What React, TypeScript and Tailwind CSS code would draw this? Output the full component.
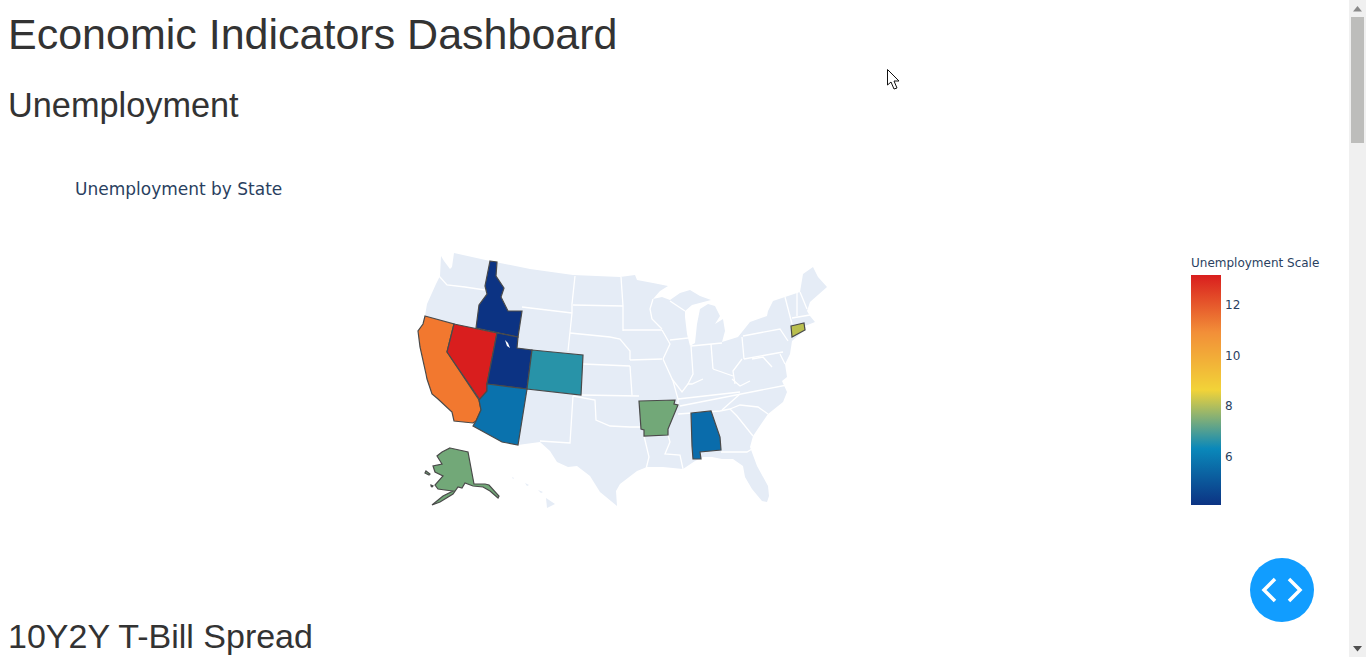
const land = "441,257 444,262 450,270 452,268 454,254 490,262 530,270 573,276 620,278 635,276 637,281 653,284 668,287 660,292 653,300 662,298 670,301 680,294 690,291 700,297 711,301 692,306 685,312 685,318 687,335 690,347 695,344 697,325 700,310 708,305 715,307 720,317 715,325 723,320 725,332 722,343 738,338 750,323 767,317 768,312 773,302 785,298 800,293 803,275 813,268 818,278 827,288 810,303 807,312 810,317 815,323 805,327 806,331 800,335 792,342 790,355 785,365 787,378 782,382 787,393 783,403 768,415 753,437 750,448 757,467 768,487 769,497 767,503 762,502 752,490 745,478 743,467 733,460 722,460 712,458 703,458 695,462 683,470 663,468 647,468 637,472 620,485 616,492 617,507 600,493 590,477 577,467 568,468 557,463 550,452 540,443 525,445 518,446 473,425 425,317 427,305 436,285 440,277";

const lines = [
  "439,277 447,286 465,288 485,291",
  "522,308 572,314",
  "575,277 572,305 572,314 568,352",
  "573,306 623,307",
  "570,334 610,338 620,340 630,352 630,361",
  "583,365 630,367",
  "621,278 623,307 623,332",
  "573,397 570,444 540,442",
  "573,397 595,401 596,421 610,427 630,428 641,428",
  "581,396 639,397",
  "644,437 649,458 646,470",
  "668,436 670,443 665,455 680,456 683,470",
  "678,415 720,412 730,410",
  "721,453 747,453 752,450",
  "730,410 737,417 753,437",
  "730,410 740,406 758,408 768,415",
  "722,411 740,395",
  "680,407 787,386",
  "678,400 740,393",
  "672,380 682,393 688,385 692,385 703,380",
  "732,380 740,387 750,382",
  "623,331 662,331",
  "653,300 650,310 652,320 662,330",
  "630,361 662,360",
  "662,331 670,345 663,360",
  "670,341 688,339",
  "691,347 693,375 688,385",
  "663,360 673,382 678,400 678,407",
  "691,347 722,344",
  "711,345 713,370",
  "713,370 733,377",
  "742,360 733,372 735,385",
  "742,338 744,360",
  "743,337 780,330 788,342",
  "744,360 783,353",
  "752,360 763,358 772,368",
  "780,355 785,365",
  "785,298 792,325",
  "797,293 797,317",
  "800,293 807,310",
  "792,319 810,316",
  "670,302 685,312",
  "630,367 632,396",
];

const states: [string, string][] = [
  ["#0c3383", "490,262 497,263 496,277 504,289 501,298 508,312 522,312 518,338 476,329 479,306 487,295 485,287"],
  ["#f2782f", "425,317 454,325 447,353 465,380 479,401 481,411 476,422 473,424 454,422 452,413 438,400 432,395 427,380 426,375 420,348 418,332 423,325"],
  ["#d91e1e", "454,325 497,334 487,385 487,392 480,401 447,353"],
  ["#0c3383", "497,334 518,338 517,349 532,351 527,390 487,385"],
  ["#2893a8", "532,351 583,356 581,396 527,390"],
  ["#0a72ad", "487,385 527,390 518,446 502,443 473,427 476,422 481,411 479,401 487,392"],
  ["#72a878", "639,402 675,401 674,405 678,406 673,418 668,430 668,436 644,437 644,431 641,430"],
  ["#0a6cab", "691,414 711,412 720,438 721,451 700,453 701,460 693,460 692,447"],
  ["#b9bf4f", "791,327 804,324 805,331 792,338"],
  ["#72a878", "450,449 468,453 474,485 485,485 489,486 499,497 498,499 490,492 483,488 473,487 465,484 462,489 458,488 453,495 440,503 432,506 443,497 453,492 445,491 438,490 435,486 443,477 435,473 433,467 442,465 437,457 442,453"],
  ["#72a878", "426,472 430,475 429,476 425,474"],
  ["#72a878", "431,486 433,487 432,488 431,487"],
];

function App() {
  return (
    <div className="flex h-[657px] w-[1366px] overflow-hidden bg-white font-['Liberation_Sans',Arial,sans-serif] text-[#333333]">
      <main className="relative h-full w-[1349px] shrink-0 overflow-hidden">
        <h1 className="pl-2 pt-[9px] text-[43px] leading-[50px] font-normal">Economic Indicators Dashboard</h1>
        <h2 className="pl-2 pt-[26px] text-[34.3px] leading-[40px] font-normal">Unemployment</h2>
        <section className="h-[491px] pl-[75px] pt-[54px]">
          <div className="font-['DejaVu_Sans',Verdana,sans-serif] text-[17px] leading-[20px] text-[#2a3f5f]">Unemployment by State</div>
          <div className="flex items-start pl-[335px] pt-[50px]">
            <svg width="424" height="270" viewBox="410 250 424 270" className="shrink-0" aria-label="Choropleth map of the United States">
              <polygon points={land} fill="#e5ecf6" />
              <polygon points="512,478 514,479 513,480" fill="#e5ecf6" />
              <polygon points="525,484 529,486 527,487" fill="#e5ecf6" />
              <polygon points="538,491 543,493 541,494" fill="#e5ecf6" />
              <polygon points="546,499 555,505 547,509" fill="#e5ecf6" />
              {lines.map((p) => (
                <polyline key={p} points={p} fill="none" stroke="#ffffff" strokeWidth="1.3" />
              ))}
              {states.map(([c, p]) => (
                <polygon key={p} points={p} fill={c} stroke="#4a4a4a" strokeWidth="1.2" />
              ))}
              <polygon points="505,341 508,344 510,349 507,347" fill="#ffffff" />
            </svg>
            <div className="ml-[357px] shrink-0 font-['DejaVu_Sans',Verdana,sans-serif] text-[#2a3f5f]">
              <div className="mt-[6px] text-[12px] leading-[16px] whitespace-nowrap">Unemployment Scale</div>
              <div className="mt-[4px] flex">
                <div className="h-[230px] w-[30px] bg-[linear-gradient(to_top,#0c3383,#0a88ba_24.5%,#f2d338_50%,#f28f38_75%,#d91e1e)]" />
                <div className="ml-[4px] flex flex-col pt-[22px] text-[12px] leading-[16px]">
                  <span className="h-[50.5px]">12</span>
                  <span className="h-[50.5px]">10</span>
                  <span className="h-[50.5px]">8</span>
                  <span className="h-[50.5px]">6</span>
                </div>
              </div>
            </div>
          </div>
        </section>
        <h2 className="pl-2 text-[34px] leading-[40px] font-normal">10Y2Y T-Bill Spread</h2>
        <button className="absolute left-[1250px] top-[558px] flex h-16 w-16 items-center justify-center rounded-full bg-[#119dff]" aria-label="Toggle code">
          <svg width="64" height="64" viewBox="0 0 64 64">
            <polyline points="25,21 14,32 25,43" fill="none" stroke="#ffffff" strokeWidth="3.5" />
            <polyline points="39,21 50,32 39,43" fill="none" stroke="#ffffff" strokeWidth="3.5" />
          </svg>
        </button>
        <svg className="absolute left-[885px] top-[67px]" width="18" height="24" viewBox="885 67 18 24">
          <polygon points="887.5,69.5 887.5,85 891,82 894,89 897,88 894,81 899,81" fill="#ffffff" stroke="#111111" strokeWidth="1" />
        </svg>
      </main>
      <aside className="relative flex h-full w-[17px] shrink-0 flex-col bg-[#f0f0f0]">
        <div className="flex h-[17px] items-center justify-center">
          <svg width="9" height="6" viewBox="0 0 9 6"><polygon points="4.5,0 9,5.5 0,5.5" fill="#8a8a8a" /></svg>
        </div>
        <div className="mx-[2px] h-[126px] bg-[#bdbdbb]" />
        <div className="flex-1" />
        <div className="flex h-[17px] items-center justify-center">
          <svg width="9" height="6" viewBox="0 0 9 6"><polygon points="0,0 9,0 4.5,5.5" fill="#505050" /></svg>
        </div>
      </aside>
    </div>
  );
}

export default App;
